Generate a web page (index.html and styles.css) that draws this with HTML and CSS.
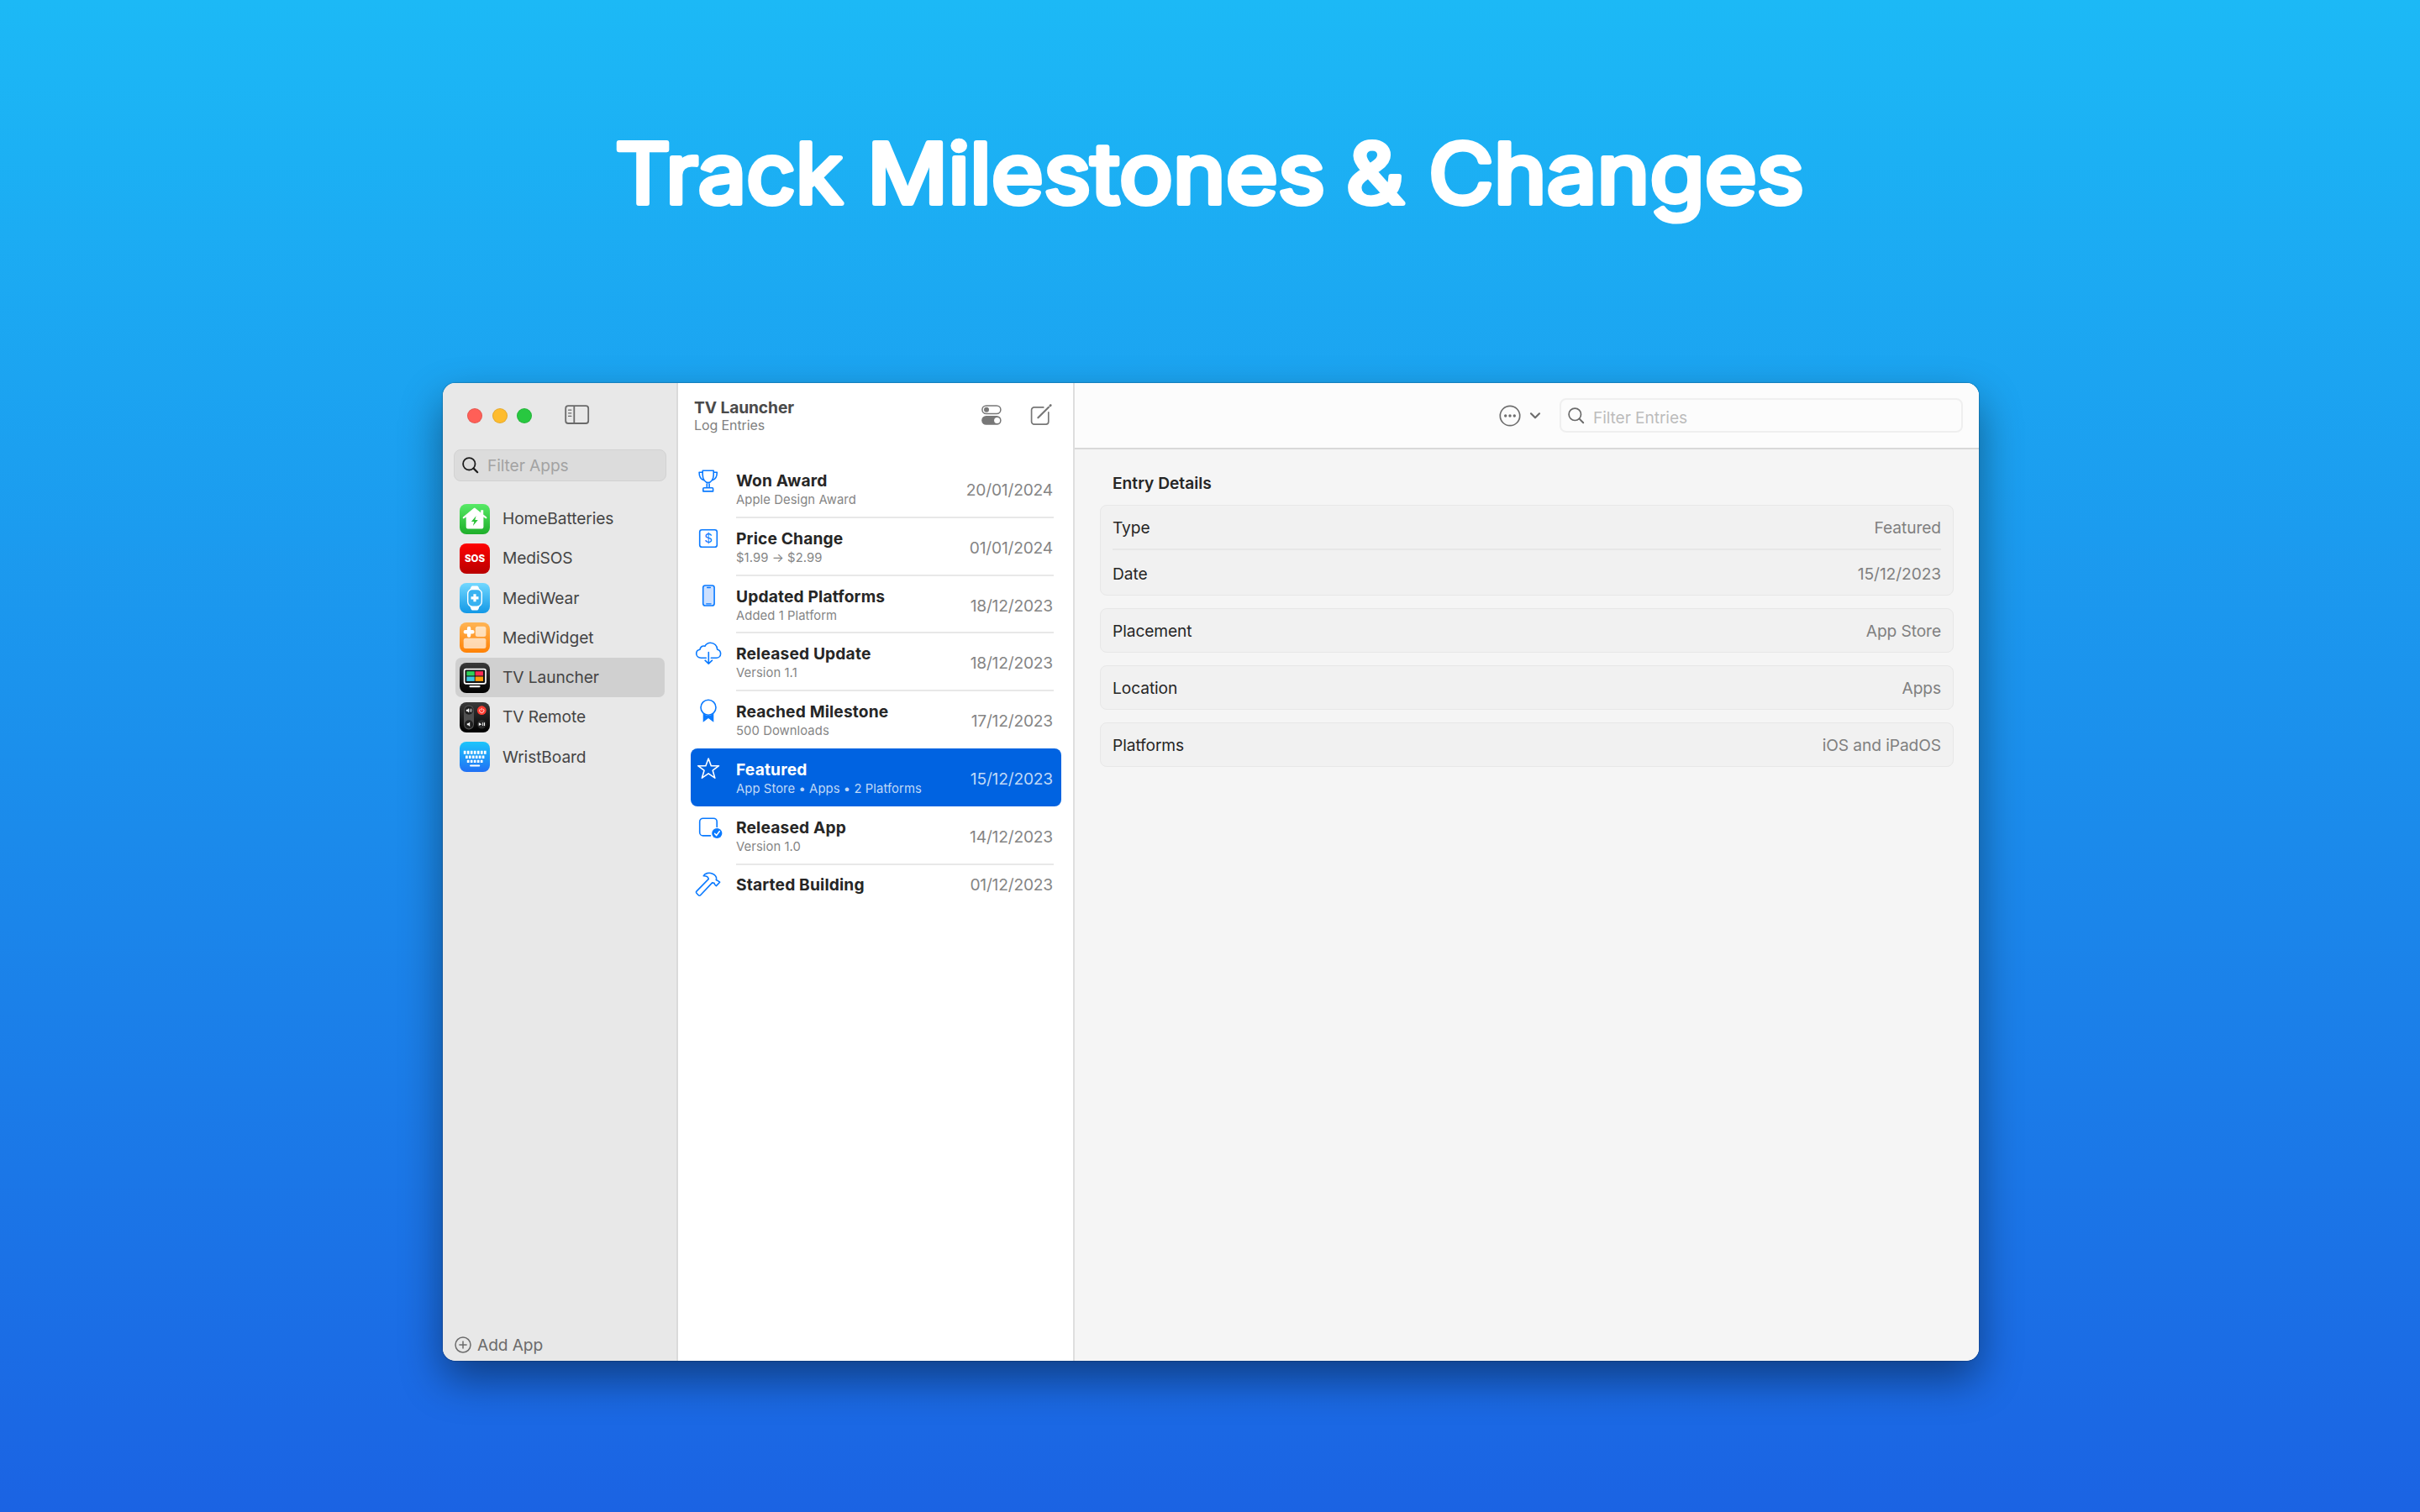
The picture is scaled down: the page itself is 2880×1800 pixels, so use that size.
FILE: index.html
```html
<!DOCTYPE html>
<html lang="en">
<head>
<meta charset="utf-8">
<title>Track Milestones &amp; Changes</title>
<link rel="stylesheet" href="styles.css">
</head>
<body>
<main class="stage">
  <h1 class="headline">
    <svg width="1440" height="150" viewBox="0 0 1440 150"><g class="headline-text"><text x="12" y="100" textLength="271" lengthAdjust="spacingAndGlyphs">Track</text> <text x="312" y="100" textLength="545" lengthAdjust="spacingAndGlyphs">Milestones</text> <text x="882" y="100" textLength="69" lengthAdjust="spacingAndGlyphs">&amp;</text> <text x="980" y="100" textLength="447" lengthAdjust="spacingAndGlyphs">Changes</text></g></svg>
  </h1>

  <section class="window">
    <aside class="sidebar">
      <div class="titlebar">
        <span class="light red"></span><span class="light yellow"></span><span class="light green"></span>
        <svg class="sidebar-toggle" width="30" height="24" viewBox="0 0 30 24" fill="none" stroke="#6a6a6a" stroke-width="1.8"><rect x="1.2" y="1.2" width="27" height="20.8" rx="3"/><path d="M11.3 1.2v20.8"/><path d="M4.6 6.2h3.2M4.6 9.8h3.2M4.6 13.4h3.2" stroke-width="1.3" stroke-linecap="round"/></svg>
      </div>
      <div class="search side-search">
        <svg width="20" height="20" viewBox="0 0 20 20" fill="none" stroke="#1d1d1d" stroke-width="1.8" stroke-linecap="round"><circle cx="8.3" cy="8.3" r="7.2"/><path d="M13.6 13.6l4.6 4.6" stroke-width="2.2"/></svg>
        <span>Filter Apps</span>
      </div>
      <nav class="apps">
        <div class="app">
          <svg class="app-icon" viewBox="0 0 36 36"><defs><linearGradient id="g1" x2="0" y2="1"><stop stop-color="#57ea66"/><stop offset="1" stop-color="#1eae2a"/></linearGradient></defs><rect width="36" height="36" rx="8" fill="url(#g1)"/><path d="M18 4.6L25.2 10.2V7.2h3v5.3l3.8 3a1 1 0 0 1-1.3 1.6l-2.3-1.6V27.6a2 2 0 0 1-2 2H9.7a2 2 0 0 1-2-2V15.5l-2.3 1.6a1 1 0 0 1-1.3-1.6L16.8 5a2 2 0 0 1 2.4 0z" fill="#fff"/><path d="M19.6 14.2l-5.7 6.7h3.4l-1.4 5.1 5.9-7h-3.5z" fill="#2cc33a"/></svg>
          <span>HomeBatteries</span></div>
        <div class="app">
          <svg class="app-icon" viewBox="0 0 36 36"><defs><linearGradient id="g2" x2="0" y2="1"><stop stop-color="#ff0202"/><stop offset="1" stop-color="#b90000"/></linearGradient></defs><rect width="36" height="36" rx="8" fill="url(#g2)"/><text class="sos" x="18" y="22.3" text-anchor="middle">SOS</text></svg>
          <span>MediSOS</span></div>
        <div class="app">
          <svg class="app-icon" viewBox="0 0 36 36"><defs><linearGradient id="g3" x2="0" y2="1"><stop stop-color="#72d8ff"/><stop offset="1" stop-color="#1298e6"/></linearGradient></defs><rect width="36" height="36" rx="8" fill="url(#g3)"/><path d="M14.5 4h7l1.8 4h-10.6zM12.7 27.5h10.6l-1.8 4.5h-7z" fill="#fff" stroke="#fff" stroke-linejoin="round"/><rect x="9.7" y="7.5" width="16.6" height="20.6" rx="5.5" fill="#38b2f1" stroke="#fff" stroke-width="1.4"/><path d="M18 13.3v9M13.5 17.8h9" stroke="#fff" stroke-width="3.2"/></svg>
          <span>MediWear</span></div>
        <div class="app">
          <svg class="app-icon" viewBox="0 0 36 36"><defs><linearGradient id="g4" x2="0" y2="1"><stop stop-color="#ffb454"/><stop offset="1" stop-color="#ff8206"/></linearGradient></defs><rect width="36" height="36" rx="8" fill="url(#g4)"/><g fill="#fff" fill-opacity=".66"><rect x="18.8" y="4.8" width="12.6" height="12.2" rx="2.5"/><rect x="4.7" y="18.7" width="26.7" height="12.3" rx="2.5"/></g><path d="M11.1 7v8.6M6.8 11.3h8.6" stroke="#fff" stroke-width="4.4" stroke-linecap="round"/></svg>
          <span>MediWidget</span></div>
        <div class="app selected">
          <svg class="app-icon" viewBox="0 0 36 36"><defs><linearGradient id="g5" x2="0" y2="1"><stop stop-color="#3a3a3a"/><stop offset="1" stop-color="#000"/></linearGradient></defs><rect width="36" height="36" rx="8" fill="url(#g5)"/><rect x="5.6" y="7.6" width="25.4" height="17.2" rx="2" fill="#111" stroke="#fff" stroke-width="1.7"/><rect x="8.3" y="10.2" width="9.4" height="5.2" fill="#30d158"/><rect x="18.6" y="10.2" width="9.4" height="5.2" fill="#ff2d55"/><rect x="8.3" y="16.5" width="9.4" height="5.4" fill="#40c8e0"/><rect x="18.6" y="16.5" width="9.4" height="5.4" fill="#ff9f0a"/><path d="M12.5 28.2h11" stroke="#fff" stroke-width="2.1" stroke-linecap="round"/></svg>
          <span>TV Launcher</span></div>
        <div class="app">
          <svg class="app-icon" viewBox="0 0 36 36"><rect width="36" height="36" rx="8" fill="url(#g5)"/><rect x="5" y="3.6" width="12" height="28.8" rx="6" fill="#505050"/><g fill="#202020"><circle cx="11" cy="9.7" r="5"/><circle cx="11" cy="26.2" r="5"/><circle cx="26.3" cy="26.2" r="5.2" fill="#2c2c2c"/></g><circle cx="26.3" cy="9.7" r="5.4" fill="#ff3b30"/><path d="M7.8 8.7h1.4l2-1.8v5.6l-2-1.8H7.8zM8.8 25.2h1.4l2-1.8v5.6l-2-1.8H8.8zM22.8 24.3l3.5 1.9-3.5 1.9zM27.2 24.3h1v3.8h-1zM29 24.3h1v3.8h-1z" fill="#fff"/><path d="M12.3 8.4q1 1.3 0 2.6M13.6 7.6q1.5 2.1 0 4.2" stroke="#fff" stroke-width=".8" fill="none"/><path d="M26.3 6.9v2.7M24.6 8a2.6 2.6 0 1 0 3.4 0" stroke="#fff" stroke-width=".8" fill="none"/></svg>
          <span>TV Remote</span></div>
        <div class="app">
          <svg class="app-icon" viewBox="0 0 36 36"><defs><linearGradient id="g6" x2="0" y2="1"><stop stop-color="#1cc5fb"/><stop offset="1" stop-color="#2070f5"/></linearGradient></defs><rect width="36" height="36" rx="8" fill="url(#g6)"/><g stroke="#fff"><path d="M4.8 12.7h27" stroke-width="3.9" stroke-dasharray="2.7 1.32"/><path d="M7 18.2h22.6" stroke-width="3.5" stroke-dasharray="2.7 1.24"/><path d="M8.8 23.4h18.9" stroke-width="3.4" stroke-dasharray="2.7 1.3"/></g><path d="M13 28.5h10.3" stroke="#fff" stroke-width="1.9" stroke-linecap="round"/></svg>
          <span>WristBoard</span></div>
      </nav>
      <div class="add-app">
        <svg width="20" height="20" viewBox="0 0 20 20" fill="none" stroke="#6c6c6c" stroke-width="1.5" stroke-linecap="round"><circle cx="10" cy="10" r="9"/><path d="M10 5.9v8.2M5.9 10h8.2"/></svg>
        <span>Add App</span>
      </div>
    </aside>

    <section class="log">
      <header class="log-head">
        <div class="log-title"><strong>TV Launcher</strong><small>Log Entries</small></div>
        <svg width="24" height="24" viewBox="0 0 24 24" fill="none" stroke="#777" stroke-width="1.5"><rect x=".9" y=".9" width="22" height="9.7" rx="4.85"/><circle cx="6" cy="5.8" r="3" fill="#777" stroke="none"/><rect x=".2" y="13" width="23.4" height="10.8" rx="5.4" fill="#777" stroke="none"/><circle cx="18.6" cy="18.4" r="3.5" fill="#fff" stroke="none"/></svg>
        <svg class="compose" width="26" height="26" viewBox="0 0 26 26" fill="none" stroke="#777" stroke-width="1.7" stroke-linecap="round"><path d="M15.8 3.9H4.8a3.2 3.2 0 0 0-3.2 3.2V21a3.2 3.2 0 0 0 3.2 3.2H18.6a3.2 3.2 0 0 0 3.2-3.2V9.8"/><path d="M9.4 16.3L22 3.8" stroke-width="2.2"/><path d="M23.8 2l.5-.5" stroke-width="2.6"/></svg>
      </header>
      <ul class="entries">
        <li class="entry">
          <svg class="glyph" viewBox="0 0 36 36"><path d="M11.2 5.2H24.2V10.2C24.2 15.5 21.2 19.6 17.7 19.6S11.2 15.5 11.2 10.2zM11.2 7.2H7.1C7.1 12.7 9 15.8 12.8 16.8M24.2 7.2H28.3C28.3 12.7 26.4 15.8 22.6 16.8M16.3 19.6V25.8M19.1 19.6V25.8M12.8 25.8H22.6a1 1 0 0 1 1 1V29.9H11.8V26.8a1 1 0 0 1 1-1z"/></svg>
          <div class="text"><b>Won Award</b><small>Apple Design Award</small></div><time>20/01/2024</time></li>
        <li class="entry">
          <svg class="glyph" viewBox="0 0 36 36"><rect x="7.7" y="6.7" width="20.6" height="20.6" rx="2.6"/><text class="dollar" x="18" y="22.4" text-anchor="middle">$</text></svg>
          <div class="text"><b>Price Change</b><small>$1.99 → $2.99</small></div><time>01/01/2024</time></li>
        <li class="entry">
          <svg class="glyph" viewBox="0 0 36 36"><rect x="11.7" y="4" width="13.4" height="24" rx="2.6" fill="#cce0ff"/><path d="M16.6 6.5h3.8M15.7 25.8h5.4" stroke-width="1.3"/></svg>
          <div class="text"><b>Updated Platforms</b><small>Added 1 Platform</small></div><time>18/12/2023</time></li>
        <li class="entry">
          <svg class="glyph" viewBox="0 0 36 36"><path d="M15.3 22.2H9.3C6 22.2 3.7 20 3.7 17.1 3.7 14.5 5.5 12.6 8 12.2 8.3 9.2 11 7.3 13.9 8.3 15.2 5.7 17.7 4.2 20.5 4.2 25 4.2 28.6 7.7 28.7 12.2 31 12.8 32.6 14.8 32.6 17.2 32.6 20 30.4 22.2 27.5 22.2H21.3M18.3 15.5V29M14.1 25.2L18.3 29.2 22.5 25.2"/></svg>
          <div class="text"><b>Released Update</b><small>Version 1.1</small></div><time>18/12/2023</time></li>
        <li class="entry no-line">
          <svg class="glyph" viewBox="0 0 36 36"><circle cx="18" cy="12.3" r="9"/><path class="solid" d="M11.7 19.6Q18 24.3 24.3 19.6V29.8L18 25.1 11.7 29.8z"/></svg>
          <div class="text"><b>Reached Milestone</b><small>500 Downloads</small></div><time>17/12/2023</time></li>
        <li class="entry active">
          <svg class="glyph" viewBox="0 0 36 36"><path d="M18.1 4L21.3 12.7H30.5L23.2 18.2 25.8 27.2 18.1 21.8 10.4 27.2 13 18.2 5.7 12.7H14.9z"/></svg>
          <div class="text"><b>Featured</b><small>App Store • Apps • 2 Platforms</small></div><time>15/12/2023</time></li>
        <li class="entry">
          <svg class="glyph" viewBox="0 0 36 36"><path d="M20.5 26.9H11.7a4 4 0 0 1-4-4V10.2a4 4 0 0 1 4-4H24.2a4 4 0 0 1 4 4V16.5"/><circle class="solid" cx="28.3" cy="24" r="6.1"/><path d="M25.7 24.4l1.9 2.2 3.6-4.9" stroke="#fff"/></svg>
          <div class="text"><b>Released App</b><small>Version 1.0</small></div><time>14/12/2023</time></li>
        <li class="entry single">
          <svg class="glyph" viewBox="0 0 36 36"><path d="M18.3 9.4L3.9 24.1a1.5 1.5 0 0 0 0 2.1l2.4 2.5a1.5 1.5 0 0 0 2.2 0L22.6 13.9M18.3 9.4C17.8 6.5 15.6 5.7 12.2 5.8 13.5 2.8 18.5 1.3 22.5 3 25.5 4.3 27.7 6.3 27.6 8.9L27.3 10.7 29 11.3 31.6 13.2 27.4 17.6 25.6 16 25 14.3 22.6 13.9"/></svg>
          <div class="text"><b>Started Building</b></div><time>01/12/2023</time></li>
      </ul>
    </section>

    <section class="detail">
      <header class="detail-head">
        <svg width="26" height="26" viewBox="0 0 26 26" fill="none" stroke="#6e6e6e" stroke-width="1.7"><circle cx="13" cy="13" r="11.7"/><g fill="#6e6e6e" stroke="none"><circle cx="7.7" cy="13" r="1.7"/><circle cx="13" cy="13" r="1.7"/><circle cx="18.3" cy="13" r="1.7"/></g></svg>
        <svg class="chevron" width="14" height="10" viewBox="0 0 14 10" fill="none" stroke="#6e6e6e" stroke-width="2.2" stroke-linecap="round" stroke-linejoin="round"><path d="M2 2.3l5 5 5-5"/></svg>
        <div class="search entry-search">
          <svg width="20" height="20" viewBox="0 0 20 20" fill="none" stroke="#6a6a6a" stroke-width="1.7" stroke-linecap="round"><circle cx="8.3" cy="8.3" r="7.2"/><path d="M13.6 13.6l4.6 4.6" stroke-width="2"/></svg>
          <span>Filter Entries</span>
        </div>
      </header>
      <div class="detail-body">
        <h2>Entry Details</h2>
        <dl class="card">
          <div class="field"><dt>Type</dt><dd>Featured</dd></div>
          <div class="field"><dt>Date</dt><dd>15/12/2023</dd></div>
        </dl>
        <dl class="card"><div class="field"><dt>Placement</dt><dd>App Store</dd></div></dl>
        <dl class="card"><div class="field"><dt>Location</dt><dd>Apps</dd></div></dl>
        <dl class="card"><div class="field"><dt>Platforms</dt><dd>iOS and iPadOS</dd></div></dl>
      </div>
    </section>
  </section>
</main>
</body>
</html>
```
FILE: styles.css
```css
* { box-sizing: border-box; margin: 0; padding: 0; }

body {
  font-family: Inter, "Liberation Sans", sans-serif;
  font-size: 19.2px;
  letter-spacing: -.1px;
  color: #262626;
}

.stage {
  width: 2880px;
  height: 1800px;
  display: flex;
  flex-direction: column;
  align-items: center;
  background: linear-gradient(#1cb9f6, #1b8fec 50%, #1b63e3);
  overflow: hidden;
}

.headline { height: 456px; padding-top: 142px; }
.headline svg { display: block; overflow: visible; }
.headline-text {
  font-size: 99px;
  font-weight: 400;
  letter-spacing: 0;
  fill: #fff;
  stroke: #fff;
  stroke-width: 6px;
  stroke-linejoin: round;
}

.window {
  width: 1828px;
  height: 1164px;
  margin-left: 2px;
  display: grid;
  grid-template-columns: 280px 472px 1fr;
  border-radius: 15px;
  overflow: hidden;
  background: #fff;
  box-shadow: 0 0 1px 1px rgba(0, 0, 0, .16), 0 22px 50px rgba(0, 0, 0, .42);
}

/* Sidebar */
.sidebar {
  display: flex;
  flex-direction: column;
  background: #e8e8e8;
  border-right: 2px solid #dadada;
  color: #454545;
}
.titlebar { display: flex; align-items: center; height: 79px; padding: 0 0 2px 29px; gap: 11.7px; }
.light { width: 18px; height: 18px; border-radius: 50%; border: 1px solid rgba(0, 0, 0, .1); }
.red { background: #ff5f57; }
.yellow { background: #febc2e; }
.green { background: #28c840; }
.sidebar-toggle { margin: -2px 0 0 27px; }

.search { display: flex; align-items: center; border-radius: 8px; }
.side-search {
  height: 38px;
  margin: 0 12px 0 13px;
  padding-left: 9px;
  gap: 10px;
  background: #dcdcdc;
  border: 1px solid #d2d2d2;
  color: #a3a3a3;
}
.apps { margin-top: 21px; padding: 0 14px 0 15px; }
.app { display: flex; align-items: center; height: 47.25px; padding-left: 5px; gap: 15px; border-radius: 7px; }
.app span { padding-bottom: 1px; }
.app.selected { background: #d0d0d0; }
.app-icon { width: 36px; height: 36px; flex: none; }
.sos { font-size: 11.5px; font-weight: 800; fill: #fff; }
.add-app {
  display: flex;
  align-items: center;
  gap: 7px;
  margin-top: auto;
  padding: 0 0 7px 14px;
  color: #6c6c6c;
}

/* Log list */
.log { border-right: 2px solid #dedede; }
.log-head { display: flex; align-items: center; height: 79px; padding: 0 25px 3px 19px; }
.log-title { display: flex; flex-direction: column; flex: 1; color: #4a4a4a; }
.log-title strong { font-weight: 700; line-height: 24px; }
.log-title small { font-size: 16px; line-height: 18px; color: #808080; }
.compose { margin-left: 34px; }

.entries { list-style: none; padding: 12px 14px 0 15px; }
.entry {
  display: flex;
  height: 68.8px;
  padding-left: 3px;
  position: relative;
  border-radius: 8px;
}
.entry::after {
  content: "";
  position: absolute;
  left: 54px;
  right: 9px;
  bottom: -1px;
  height: 2px;
  background: #e8e8e8;
}
.no-line::after, .active::after, .single::after { display: none; }
.glyph {
  width: 36px;
  height: 36px;
  margin-top: 8px;
  fill: none;
  stroke: #0a7aff;
  stroke-width: 1.6;
  stroke-linecap: round;
  stroke-linejoin: round;
}
.glyph .solid { fill: #0a7aff; stroke: none; }
.dollar { font-size: 15px; fill: #0a7aff; stroke: none; }
.text { display: flex; flex-direction: column; flex: 1; padding: 12px 0 0 15px; }
.text b { font-weight: 700; line-height: 26px; letter-spacing: .15px; }
.text small { font-size: 14.8px; line-height: 20.6px; letter-spacing: .08px; color: #858585; }
.entry time { padding: 23px 10px 0 0; line-height: 26px; letter-spacing: -.2px; color: #858585; }
.single time, .single .text { padding-top: 11px; }
.active { background: #0063e1; color: #fff; }
.active .glyph { stroke: #fff; }
.active small, .active time { color: #bfd8f7; }

/* Entry details */
.detail { background: #f5f5f5; }
.detail-head {
  display: flex;
  align-items: center;
  height: 79px;
  padding: 0 19px 0 0;
  justify-content: flex-end;
  background: #fcfcfc;
  border-bottom: 2px solid #d9d9d9;
}
.chevron { margin: 0 22px 0 10px; }
.entry-search {
  width: 480px;
  height: 41px;
  padding-left: 8px;
  gap: 10px;
  border: 2px solid #efefef;
  color: #bcbcbc;
}
.entry-search span { padding-top: 4px; }
.detail-body { padding: 27px 30px 0; }
h2 { font-size: 19.2px; font-weight: 600; line-height: 26px; letter-spacing: 0; padding: 0 15px; margin-bottom: 13px; }
.card {
  margin-bottom: 15px;
  padding: 0 14px;
  background: #f1f1f1;
  border: 1.5px solid #e7e7e7;
  border-radius: 8px;
}
.field { display: flex; justify-content: space-between; align-items: center; height: 51px; }
.field + .field { border-top: 2px solid #e7e7e7; height: 55px; padding-top: 2px; }
.field dd { color: #808080; }
```
